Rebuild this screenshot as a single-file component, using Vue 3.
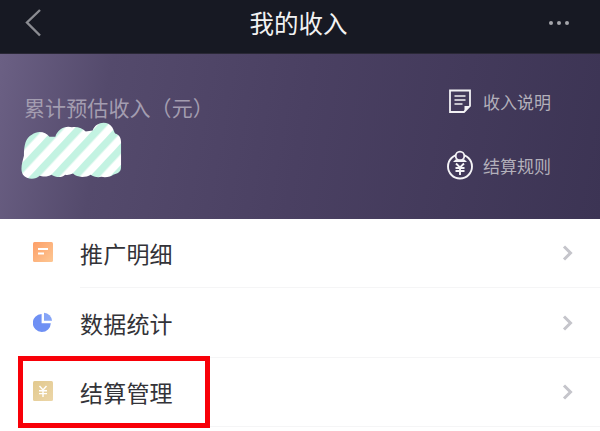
<script setup>
const rows = [
  { key: 'detail', label: '推广明细' },
  { key: 'stats', label: '数据统计' },
  { key: 'settle', label: '结算管理' }
]
</script>

<template>
  <div class="page">
    <header class="nav">
      <svg class="back" width="20" height="30" viewBox="0 0 20 30">
        <path d="M17 2 L4 14.5 L17 27.5" fill="none" stroke="#8b8c92" stroke-width="2.4" />
      </svg>
      <h1 class="title">我的收入</h1>
      <div class="dots"><i></i><i></i><i></i></div>
    </header>

    <section class="hero">
      <div class="total">
        <div class="total-label">累计预估收入（元）</div>
        <svg class="blob" width="102" height="61" viewBox="0 0 104 58" preserveAspectRatio="none">
          <defs>
            <pattern id="stripes" width="14.5" height="14.5" patternUnits="userSpaceOnUse" patternTransform="rotate(45)">
              <rect width="14.5" height="14.5" fill="#ffffff" />
              <rect width="7.2" height="14.5" fill="#c3f3e2" />
            </pattern>
          </defs>
          <path fill="url(#stripes)" d="M3 33 C3 22 5 16 11 13 C17 9 25 10 29 15 L35 15 C37 8 45 4 52 6 C57 5 63 7 66 10 L73 9 C76 1 88 -1 93 6 C95 9 95 11 96 12 C100 13 102 16 102 20 L102 44 C102 49 98 50 94 51 C92 53 86 54 82 53 C78 54 74 53 71 51 C66 54 57 54 53 50 C50 51 47 52 45 51 C42 54 36 54 31 51 C28 53 22 53 19 52 C15 56 6 56 2 51 C-1 46 1 40 3 33 Z" />
        </svg>
      </div>
      <div class="links">
        <div class="link">
          <svg class="link-icon" width="26" height="26" viewBox="0 0 26 26">
            <path d="M3 2.5 H23 V18 L17 24 H3 Z" fill="none" stroke="#f2f1f4" stroke-width="1.8" />
            <path d="M7.5 8 H18.5 M7.5 12 H18.5 M7.5 16 H15.5" fill="none" stroke="#f2f1f4" stroke-width="1.7" />
            <path d="M23 18 H17.5 V24 Z" fill="#f2f1f4" />
          </svg>
          <span>收入说明</span>
        </div>
        <div class="link">
          <svg class="link-icon" width="28" height="30" viewBox="0 0 28 30">
            <circle cx="14" cy="16.5" r="12" fill="none" stroke="#f4f3f6" stroke-width="1.9" />
            <circle cx="14" cy="6" r="4.3" fill="#46395f" stroke="#f4f3f6" stroke-width="1.8" />
            <path d="M9.5 9.5 H18.5 L21 12 H7 Z" fill="#f4f3f6" />
            <path d="M10 13.5 L14 17.5 L18 13.5 M9.5 18 H18.5 M9.5 21 H18.5 M14 17.5 V25" fill="none" stroke="#f4f3f6" stroke-width="1.9" />
          </svg>
          <span>结算规则</span>
        </div>
      </div>
    </section>

    <ul class="list">
      <li v-for="row in rows" :key="row.key" class="row">
        <div class="icon-cell">
          <svg v-if="row.key === 'detail'" width="20" height="20" viewBox="0 0 20 20">
            <defs>
              <linearGradient id="orange" x1="0" y1="0" x2="1" y2="1">
                <stop offset="0" stop-color="#fd9f68" />
                <stop offset="1" stop-color="#fdc793" />
              </linearGradient>
            </defs>
            <rect width="20" height="20" rx="1.5" fill="url(#orange)" />
            <path d="M5 7 H15 M5 11.5 H11" stroke="#fff" stroke-width="2" fill="none" />
          </svg>
          <svg v-else-if="row.key === 'stats'" width="20" height="20" viewBox="0 0 20 20">
            <path d="M8.6 2 V11.2 H17.8 A9 9 0 1 1 8.6 2 Z" fill="#6f90f4" />
            <path d="M11 0.8 A8.4 8.4 0 0 1 19 8.8 H11 Z" fill="#86a5f7" />
          </svg>
          <svg v-else width="20" height="20" viewBox="0 0 20 20">
            <defs>
              <linearGradient id="gold" x1="0" y1="0" x2="1" y2="1">
                <stop offset="0" stop-color="#e2c98e" />
                <stop offset="1" stop-color="#ecd6a8" />
              </linearGradient>
            </defs>
            <rect width="20" height="20" rx="1.5" fill="url(#gold)" />
            <path d="M6.5 5 L10 9 L13.5 5 M6 9.8 H14 M6 12.6 H14 M10 9 V16" stroke="#fff" stroke-width="1.4" fill="none" />
          </svg>
        </div>
        <div class="row-body">
          <span class="row-label">{{ row.label }}</span>
          <svg class="chev" width="12" height="16" viewBox="0 0 12 16">
            <path d="M2 1.5 L8.5 8 L2 14.5" fill="none" stroke="#c5c5cb" stroke-width="3" />
          </svg>
        </div>
      </li>
    </ul>

    <div class="highlight"></div>
  </div>
</template>

<style>
html, body { margin: 0; padding: 0; background: #fff; }
</style>

<style scoped>
.page {
  position: relative;
  width: 600px;
  height: 431px;
  overflow: hidden;
  background: #fff;
  font-family: "Noto Sans CJK SC", "Liberation Sans", sans-serif;
}
.nav {
  height: 53px;
  box-sizing: border-box;
  background: #171923;
  display: flex;
  align-items: center;
  justify-content: space-between;
  padding: 0 31px 7px 23px;
}
.back { display: block; margin-right: 5px; }
.title {
  margin: 0;
  font-size: 24.5px;
  font-weight: 400;
  line-height: 32px;
  color: #f2f2f3;
}
.dots { display: flex; gap: 4px; }
.dots i { width: 4px; height: 4px; border-radius: 50%; background: #a5a6ab; }
.hero {
  height: 165px;
  border-top: 1px solid #2a2836;
  background: linear-gradient(100deg, #6b6084 0%, #544a6c 18%, #4a4062 50%, #3c3454 100%);
  display: flex;
  justify-content: space-between;
}
.total { padding: 39px 0 0 24px; }
.total-label {
  font-size: 21px;
  line-height: 28px;
  color: #a39db0;
  letter-spacing: 0.1px;
}
.blob { display: block; margin: 0 0 0 -3px; }
.links {
  display: flex;
  flex-direction: column;
  gap: 28px;
  padding: 29px 49px 0 0;
}
.link {
  display: flex;
  align-items: center;
  height: 36px;
  font-size: 17px;
  color: #b3b0bb;
}
.link-icon { display: block; width: 28px; margin-right: 9px; }
.list {
  margin: 0;
  padding: 0;
  list-style: none;
}
.row {
  display: flex;
  height: 69.4px;
}
.icon-cell {
  width: 80px;
  padding-left: 33px;
  box-sizing: border-box;
  display: flex;
  align-items: center;
}
.icon-cell svg { display: block; margin-bottom: 3px; }
.row-body {
  flex: 1;
  display: flex;
  align-items: center;
  justify-content: space-between;
  padding-right: 26px;
  border-bottom: 1px solid #f5f5f6;
}
.row-label {
  font-size: 23px;
  color: #333338;
  letter-spacing: 0.2px;
}
.chev { display: block; }
.highlight {
  position: absolute;
  left: 18px;
  top: 356px;
  width: 192px;
  height: 72px;
  box-sizing: border-box;
  border: 5px solid #f80008;
}
</style>
